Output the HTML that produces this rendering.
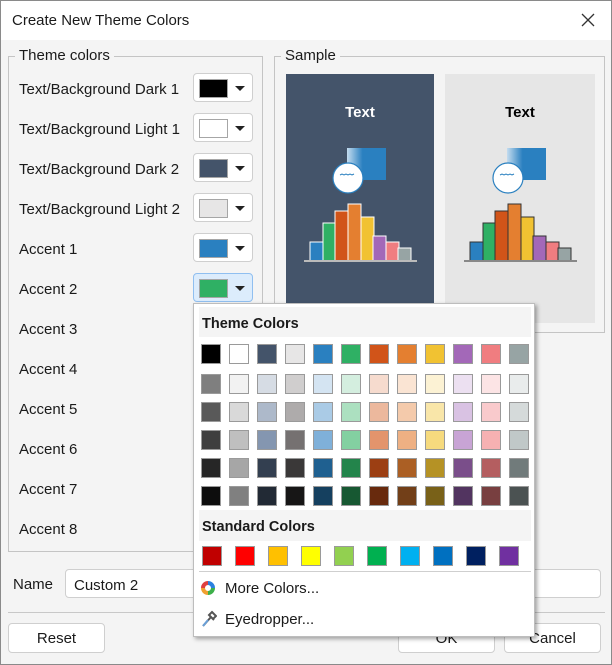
<!DOCTYPE html>
<html><head><meta charset="utf-8"><style>
*{box-sizing:border-box;margin:0;padding:0}
body{width:612px;height:665px;position:relative;background:#f4f4f4;font-family:"Liberation Sans",sans-serif;font-size:15px;color:#1a1a1a;overflow:hidden}
.a{position:absolute}
.win{left:0;top:0;width:612px;height:665px;border:1px solid #8a8a8a}
.title{left:1px;top:1px;width:610px;height:39px;background:#fff}
.gb{border:1px solid #c4c4c4}
.lbl{background:#f4f4f4;padding:0 4px;font-size:15px}
.btn{width:60px;height:29px;border:1px solid #cfcfcf;border-radius:4px;background:#fff}
.btn .sw{position:absolute;left:5px;top:5px;width:29px;height:19px;border:1px solid #a6a6a6}
.btn .ar{position:absolute;left:41px;top:12px;width:0;height:0;border-left:5px solid transparent;border-right:5px solid transparent;border-top:5px solid #222}
.pb{height:30px;border:1px solid #cfcfcf;border-radius:4px;background:#fff;text-align:center;line-height:30px;font-size:15px}
.s{position:absolute;width:20px;height:20px;border:1px solid #9a9a9a}
</style></head><body>
<div class="a win"></div>
<div class="a title"></div>
<div class="a" style="left:12px;top:12px;font-size:15px">Create New Theme Colors</div>
<svg class="a" style="left:581px;top:13px" width="14" height="14"><path d="M1 1L13 13M13 1L1 13" stroke="#333" stroke-width="1.3"/></svg>

<div class="a gb" style="left:8px;top:56px;width:255px;height:496px"></div>
<div class="a lbl" style="left:15px;top:47px">Theme colors</div>
<div class="a gb" style="left:274px;top:56px;width:331px;height:277px"></div>
<div class="a lbl" style="left:281px;top:47px">Sample</div>

<div class="a" style="left:19px;top:81px;line-height:18px">
<div style="height:40px">Text/Background Dark 1</div>
<div style="height:40px">Text/Background Light 1</div>
<div style="height:40px">Text/Background Dark 2</div>
<div style="height:40px">Text/Background Light 2</div>
<div style="height:40px">Accent 1</div>
<div style="height:40px">Accent 2</div>
<div style="height:40px">Accent 3</div>
<div style="height:40px">Accent 4</div>
<div style="height:40px">Accent 5</div>
<div style="height:40px">Accent 6</div>
<div style="height:40px">Accent 7</div>
<div style="height:40px">Accent 8</div>
</div>
<div class="a btn" style="left:193px;top:73px"><div class="sw" style="background:#000"></div><div class="ar"></div></div>
<div class="a btn" style="left:193px;top:113px"><div class="sw" style="background:#fff"></div><div class="ar"></div></div>
<div class="a btn" style="left:193px;top:153px"><div class="sw" style="background:#44546a"></div><div class="ar"></div></div>
<div class="a btn" style="left:193px;top:193px"><div class="sw" style="background:#e7e6e6"></div><div class="ar"></div></div>
<div class="a btn" style="left:193px;top:233px"><div class="sw" style="background:#2a80c0"></div><div class="ar"></div></div>
<div class="a btn" style="left:193px;top:273px;background:#dcecfc;border-color:#90bff0"><div class="sw" style="background:#2fb064"></div><div class="ar"></div></div>

<svg class="a" style="left:0;top:0" width="612" height="340">
<rect x="286" y="74" width="148" height="260" fill="#44546a"/>
<rect x="445" y="74" width="150" height="249" fill="#e6e6e6"/>
<text x="360" y="117" text-anchor="middle" font-family="Liberation Sans" font-weight="bold" font-size="15" fill="#fff">Text</text>
<text x="520" y="117" text-anchor="middle" font-family="Liberation Sans" font-weight="bold" font-size="15" fill="#000">Text</text>
<defs><linearGradient id="g" x1="0" x2="1"><stop offset="0" stop-color="#c4dcef"/><stop offset="0.4" stop-color="#2a80c0"/></linearGradient></defs>
<g id="grp">
<rect x="347" y="148" width="39" height="32" fill="url(#g)"/>
<circle cx="348" cy="178" r="15" fill="#fff" stroke="#2a80c0" stroke-width="1.2"/>
<path d="M340 175l2-1 2 1 2-1 2 1 2-1 2 1 2-1" stroke="#2a80c0" fill="none" stroke-width="1"/>
</g>
<use href="#grp" x="160"/>
<g stroke="#fff" stroke-width="1">
<rect x="310" y="242" width="13" height="19" fill="#2a80c0"/>
<rect x="323" y="223" width="13" height="38" fill="#2fb064"/>
<rect x="335" y="211" width="13" height="50" fill="#d15419"/>
<rect x="348" y="204" width="13" height="57" fill="#e47f30"/>
<rect x="361" y="217" width="13" height="44" fill="#f1c232"/>
<rect x="373" y="236" width="13" height="25" fill="#a368b8"/>
<rect x="386" y="242" width="13" height="19" fill="#f07d80"/>
<rect x="398" y="248" width="13" height="13" fill="#97a4a4"/>
</g>
<g stroke="#333" stroke-width="1">
<rect x="470" y="242" width="13" height="19" fill="#2a80c0"/>
<rect x="483" y="223" width="13" height="38" fill="#2fb064"/>
<rect x="495" y="211" width="13" height="50" fill="#d15419"/>
<rect x="508" y="204" width="13" height="57" fill="#e47f30"/>
<rect x="521" y="217" width="13" height="44" fill="#f1c232"/>
<rect x="533" y="236" width="13" height="25" fill="#a368b8"/>
<rect x="546" y="242" width="13" height="19" fill="#f07d80"/>
<rect x="558" y="248" width="13" height="13" fill="#97a4a4"/>
</g>
<rect x="304" y="260" width="113" height="2" fill="#bbb"/>
<rect x="464" y="260" width="113" height="2" fill="#888"/>
</svg>

<div class="a" style="left:13px;top:576px">Name</div>
<div class="a" style="left:65px;top:569px;width:536px;height:29px;border:1px solid #cfcfcf;border-radius:4px;background:#fff;padding:7px 0 0 8px">Custom 2</div>
<div class="a" style="left:8px;top:612px;width:597px;height:1px;background:#c8c8c8"></div>
<div class="a pb" style="left:8px;top:623px;width:97px">Reset</div>
<div class="a pb" style="left:398px;top:623px;width:97px">OK</div>
<div class="a pb" style="left:504px;top:623px;width:97px">Cancel</div>

<div class="a" style="left:193px;top:303px;width:342px;height:334px;background:#fff;border:1px solid #bdbdbd;box-shadow:2px 2px 4px rgba(0,0,0,0.35)">
<div class="a" style="left:5px;top:3px;width:332px;height:30px;background:#f4f4f4;font-weight:bold;font-size:14.5px;padding:9px 0 0 3px">Theme Colors</div>
<div class="a" style="left:5px;top:206px;width:332px;height:31px;background:#f4f4f4;font-weight:bold;font-size:14.5px;padding:9px 0 0 3px">Standard Colors</div>
<div class="a" style="left:5px;top:267px;width:332px;height:1px;background:#cfcfcf"></div>
<svg class="a" style="left:7px;top:277px" width="14" height="14"><g fill="none" stroke-width="4"><path d="M7 2A5 5 0 0 1 12 7" stroke="#2a80e0"/><path d="M12 7A5 5 0 0 1 7 12" stroke="#3db04a"/><path d="M7 12A5 5 0 0 1 2 7" stroke="#f0a030"/><path d="M2 7A5 5 0 0 1 7 2" stroke="#e04040"/></g></svg>
<div class="a" style="left:31px;top:276px">More Colors...</div>
<svg class="a" style="left:7px;top:306px" width="16" height="18"><path d="M2 16L10 7M8 5l5 5M11 2l4 4-3 3-4-4z" stroke="#555" stroke-width="2" fill="none"/><path d="M2 16l5-6" stroke="#6aa0d8" stroke-width="2"/></svg>
<div class="a" style="left:31px;top:307px">Eyedropper...</div>
<div id="grid"></div>
</div>
<script>
var rows=[
["#000","#fff","#44546a","#e7e6e6","#2a80c0","#2fb064","#d15419","#e47f30","#f1c232","#a368b8","#f07d80","#97a4a4"],
["#7f7f7f","#f2f2f2","#d6dce4","#d0cece","#d4e4f2","#d4eedf","#f6dbce","#fae4d3","#fcf2d4","#ece0f1","#fce4e5","#e9ecec"],
["#595959","#d9d9d9","#adb9ca","#aeabab","#aacbe6","#ace0c0","#ecb89d","#f4caab","#f9e6a9","#d9c2e3","#f9cacc","#d5dada"],
["#3f3f3f","#bfbfbf","#8496b0","#757171","#7fb0d9","#83d0a1","#e3946c","#eeb083","#f6da7e","#c8a4d5","#f6b1b2","#c0c8c8"],
["#262626","#a6a6a6","#333f50","#3a3838","#1f6090","#23844b","#9c3f13","#ab5f24","#b59225","#7a4e8a","#b45e60","#717b7b"],
["#0d0d0d","#808080","#222a35","#171616","#15405f","#175832","#682a0d","#723f18","#796118","#523460","#783f40","#4b5252"]];
var ys=[40,70,98,126,154,182],h="";
rows.forEach(function(r,i){r.forEach(function(c,j){h+='<div class="s" style="left:'+(7+j*28)+'px;top:'+ys[i]+'px;background:'+c+'"></div>';});});
["#c00000","#ff0000","#ffc000","#ffff00","#92d050","#00b050","#00b0f0","#0070c0","#002060","#7030a0"].forEach(function(c,j){h+='<div class="s" style="left:'+(8+j*33)+'px;top:242px;background:'+c+'"></div>';});
document.getElementById("grid").innerHTML=h;
</script>
</body></html>
